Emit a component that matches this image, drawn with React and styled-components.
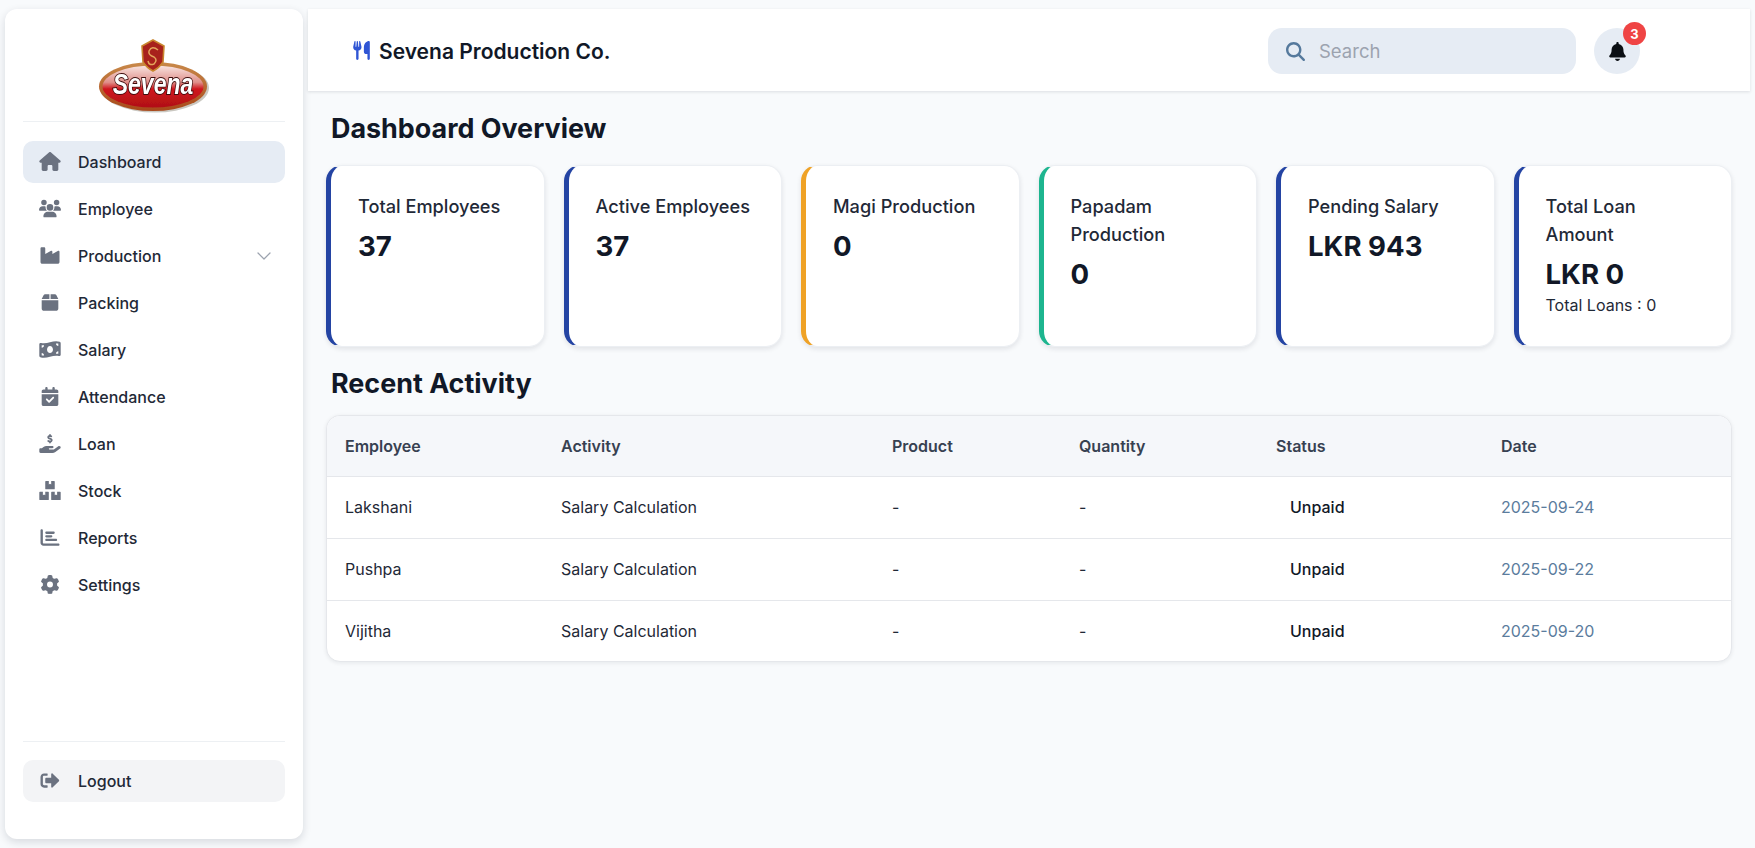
import React from "react";
import styled, { createGlobalStyle } from "styled-components";
import {
  FaHouse, FaUsers, FaIndustry, FaBox, FaMoneyBillWave, FaCalendarCheck,
  FaHandHoldingDollar, FaChartBar, FaGear,
  FaUtensils, FaMagnifyingGlass, FaBell,
} from "react-icons/fa6";
import { FaBoxes, FaSignOutAlt } from "react-icons/fa";
import { ChevronDown } from "lucide-react";

const GlobalStyle = createGlobalStyle`
  * { box-sizing: border-box; }
  html, body { margin: 0; padding: 0; height: 100%; }
  body {
    background: #f8fafc;
    font-family: Inter, "Noto Sans", sans-serif;
    color: #111827;
    overflow: hidden;
  }
`;

const Page = styled.div`
  display: flex;
  height: 848px;
  padding: 9px 5px 9px 5px;
  gap: 5px;
`;

const Sidebar = styled.aside`
  width: 298px;
  flex-shrink: 0;
  display: flex;
  flex-direction: column;
  background: #fff;
  border-radius: 12px;
  box-shadow: 0 3px 8px rgba(15, 23, 42, 0.14);
  padding: 31px 18px 37px;
`;

const LogoWrap = styled.div`
  display: flex;
  justify-content: center;
  height: 82px;
  border-bottom: 1px solid #edf0f3;
  margin-bottom: 19px;
`;

const Nav = styled.nav`
  display: flex;
  flex-direction: column;
  gap: 5px;
  flex: 1;
`;

const NavItem = styled.div`
  display: flex;
  align-items: center;
  height: 42px;
  padding: 0 9px 1px 16px;
  border-radius: 10px;
  font-size: 16px;
  font-weight: 500;
  color: #1f2937;
  background: ${(p) => (p.$active ? "#e6ecf4" : p.$muted ? "#f3f4f6" : "transparent")};
  svg.nav-icon {
    width: 22px;
    height: 19px;
    color: #6b7280;
    margin-right: 17px;
    flex-shrink: 0;
  }
`;

const Chevron = styled(ChevronDown)`
  margin-left: auto;
  color: #9ca3af;
`;

const SideFooter = styled.div`
  border-top: 1px solid #edf0f3;
  padding-top: 18px;
`;

const Main = styled.div`
  flex: 1;
  min-width: 0;
  display: flex;
  flex-direction: column;
`;

const Header = styled.header`
  height: 82px;
  background: #fff;
  display: flex;
  align-items: center;
  padding: 2px 0 0 45px;
  box-shadow: 0 1px 3px rgba(15, 23, 42, 0.12);
`;

const Brand = styled.div`
  display: flex;
  align-items: center;
  gap: 9px;
  padding-top: 1px;
  font-size: 21px;
  font-weight: 600;
  color: #111827;
  svg { color: #2f55d4; width: 17px; height: 19px; margin-top: -3px; }
`;

const HeaderRight = styled.div`
  margin-left: auto;
  margin-right: 110px;
  display: flex;
  align-items: center;
  gap: 18px;
`;

const SearchBox = styled.label`
  width: 308px;
  height: 46px;
  display: flex;
  align-items: center;
  gap: 12px;
  padding: 0 18px;
  background: #e6ecf4;
  border-radius: 14px;
  svg { color: #55799c; width: 19px; height: 19px; flex-shrink: 0; }
`;

const SearchInput = styled.input`
  flex: 1;
  min-width: 0;
  border: 0;
  outline: 0;
  background: transparent;
  font-family: inherit;
  font-size: 18.5px;
  color: #111827;
  &::placeholder { color: #9ca3af; opacity: 1; }
`;

const BellButton = styled.div`
  position: relative;
  width: 46px;
  height: 46px;
  border-radius: 50%;
  background: #e6ecf4;
  display: flex;
  align-items: center;
  justify-content: center;
  svg { color: #0b0f14; width: 17px; height: 19px; }
`;

const Badge = styled.span`
  position: absolute;
  top: -6px;
  right: -6px;
  width: 23px;
  height: 23px;
  border-radius: 50%;
  background: #ef4444;
  color: #fff;
  font-size: 13px;
  font-weight: 700;
  display: flex;
  align-items: center;
  justify-content: center;
`;

const Content = styled.main`
  padding: 17px 18px 0 18px;
`;

const SectionTitle = styled.h2`
  margin: ${(p) => p.$margin};
  padding-left: 5px;
  font-size: 26.9px;
  line-height: 40px;
  font-weight: 700;
  color: #111827;
`;

const CardRow = styled.div`
  display: grid;
  grid-template-columns: repeat(6, 1fr);
  gap: 19px;
`;

const Card = styled.div`
  height: 182px;
  background: #fff;
  border-radius: 16px;
  border: 1px solid #eceff3;
  border-left: 5px solid ${(p) => p.$accent};
  box-shadow: 0 2px 5px rgba(15, 23, 42, 0.1);
  padding: 26px 24px 0 27px;
`;

const CardLabel = styled.div`
  font-size: 18.2px;
  line-height: 28px;
  font-weight: 500;
  color: #1f2937;
`;

const CardValue = styled.div`
  margin-top: 9px;
  font-size: 27.6px;
  line-height: 34px;
  font-weight: 700;
  color: #111827;
`;

const CardNote = styled.div`
  margin-top: 4px;
  font-size: 16px;
  line-height: 20px;
  color: #1f2937;
`;

const TableCard = styled.div`
  background: #fff;
  border: 1px solid #e5e7eb;
  border-radius: 14px;
  overflow: hidden;
  box-shadow: 0 1px 4px rgba(15, 23, 42, 0.08);
`;

const Table = styled.table`
  width: 100%;
  border-collapse: collapse;
  table-layout: fixed;
  font-size: 16px;
  th {
    height: 60px;
    padding: 0 18px;
    text-align: left;
    font-weight: 600;
    color: #374151;
    background: #f5f7fa;
  }
  td {
    height: 62px;
    padding: 0 18px;
    color: #1f2937;
    border-top: 1px solid #e5e7eb;
  }
  tr:last-child td { height: 61px; }
`;

const StatusText = styled.span`
  padding-left: 14px;
  font-weight: 500;
  color: #111827;
`;

const DateCell = styled.td`
  && { color: #5b7c9d; }
`;

function Logo() {
  return (
    <svg width="116" height="76" viewBox="0 0 116 76" style={{ marginTop: -2 }}>
      <defs>
        <linearGradient id="oval" x1="0" y1="0" x2="0" y2="1">
          <stop offset="0" stopColor="#f8e4e0" />
          <stop offset="0.4" stopColor="#e08f8a" />
          <stop offset="0.56" stopColor="#cf161d" />
          <stop offset="1" stopColor="#b01016" />
        </linearGradient>
        <linearGradient id="rim" x1="0" y1="0" x2="0" y2="1">
          <stop offset="0" stopColor="#c98a4a" />
          <stop offset="1" stopColor="#a8481a" />
        </linearGradient>
        <filter id="soft"><feGaussianBlur stdDeviation="0.4" /></filter>
      </defs>
      <g filter="url(#soft)">
        <ellipse cx="59" cy="50" rx="54" ry="24.5" fill="#8a8478" opacity="0.45" />
        <ellipse cx="57" cy="48.5" rx="54" ry="24.5" fill="url(#rim)" />
        <ellipse cx="57" cy="48.5" rx="50.5" ry="21" fill="url(#oval)" />
        <path d="M57 2 L68 8 L67 24 Q63 30 57 33 Q51 30 47 24 L46 8 Z" fill="#a8231c" stroke="#c9862f" strokeWidth="1.6" />
        <path d="M62 12 Q56 7 53 13 Q52 17 58 19 Q62 22 58 26 Q53 28 52 23" fill="none" stroke="#e3a55c" strokeWidth="1.5" />
        <text transform="translate(57 56) scale(1 1.27)" textAnchor="middle" fontFamily="Liberation Sans, sans-serif" fontWeight="700" fontStyle="italic" fontSize="23" fill="#fff" stroke="#3a0a0a" strokeWidth="1.4" paintOrder="stroke">Sevena</text>
      </g>
    </svg>
  );
}

const navItems = [
  { label: "Dashboard", icon: FaHouse, active: true },
  { label: "Employee", icon: FaUsers },
  { label: "Production", icon: FaIndustry, hasMenu: true },
  { label: "Packing", icon: FaBox },
  { label: "Salary", icon: FaMoneyBillWave },
  { label: "Attendance", icon: FaCalendarCheck },
  { label: "Loan", icon: FaHandHoldingDollar },
  { label: "Stock", icon: FaBoxes },
  { label: "Reports", icon: FaChartBar },
  { label: "Settings", icon: FaGear },
];

const stats = [
  { label: "Total Employees", value: "37", accent: "#2444a3" },
  { label: "Active Employees", value: "37", accent: "#2444a3" },
  { label: "Magi Production", value: "0", accent: "#efa226" },
  { label: "Papadam Production", value: "0", accent: "#1db58f" },
  { label: "Pending Salary", value: "LKR 943", accent: "#2444a3" },
  { label: "Total Loan Amount", value: "LKR 0", accent: "#2444a3", note: "Total Loans : 0" },
];

const activity = [
  { name: "Lakshani", date: "2025-09-24" },
  { name: "Pushpa", date: "2025-09-22" },
  { name: "Vijitha", date: "2025-09-20" },
];

const columnWidths = [216, 331, 187, 197, 225, 249];

export default function App() {
  return (
    <>
      <GlobalStyle />
      <Page>
        <Sidebar>
          <LogoWrap><Logo /></LogoWrap>
          <Nav>
            {navItems.map((item) => (
              <NavItem key={item.label} $active={item.active}>
                <item.icon className="nav-icon" />
                {item.label}
                {item.hasMenu && <Chevron size={24} strokeWidth={1.25} />}
              </NavItem>
            ))}
          </Nav>
          <SideFooter>
            <NavItem $muted>
              <FaSignOutAlt className="nav-icon" />
              Logout
            </NavItem>
          </SideFooter>
        </Sidebar>
        <Main>
          <Header>
            <Brand><FaUtensils />Sevena Production Co.</Brand>
            <HeaderRight>
              <SearchBox>
                <FaMagnifyingGlass />
                <SearchInput placeholder="Search" />
              </SearchBox>
              <BellButton>
                <FaBell />
                <Badge>3</Badge>
              </BellButton>
            </HeaderRight>
          </Header>
          <Content>
            <SectionTitle $margin="0 0 17px">Dashboard Overview</SectionTitle>
            <CardRow>
              {stats.map((s) => (
                <Card key={s.label} $accent={s.accent}>
                  <CardLabel>{s.label}</CardLabel>
                  <CardValue>{s.value}</CardValue>
                  {s.note && <CardNote>{s.note}</CardNote>}
                </Card>
              ))}
            </CardRow>
            <SectionTitle $margin="16px 0 12px">Recent Activity</SectionTitle>
            <TableCard>
              <Table>
                <colgroup>
                  {columnWidths.map((w, i) => <col key={i} width={w} />)}
                </colgroup>
                <thead>
                  <tr>
                    <th>Employee</th><th>Activity</th><th>Product</th>
                    <th>Quantity</th><th>Status</th><th>Date</th>
                  </tr>
                </thead>
                <tbody>
                  {activity.map((row) => (
                    <tr key={row.name}>
                      <td>{row.name}</td>
                      <td>Salary Calculation</td>
                      <td>-</td>
                      <td>-</td>
                      <td><StatusText>Unpaid</StatusText></td>
                      <DateCell>{row.date}</DateCell>
                    </tr>
                  ))}
                </tbody>
              </Table>
            </TableCard>
          </Content>
        </Main>
      </Page>
    </>
  );
}
